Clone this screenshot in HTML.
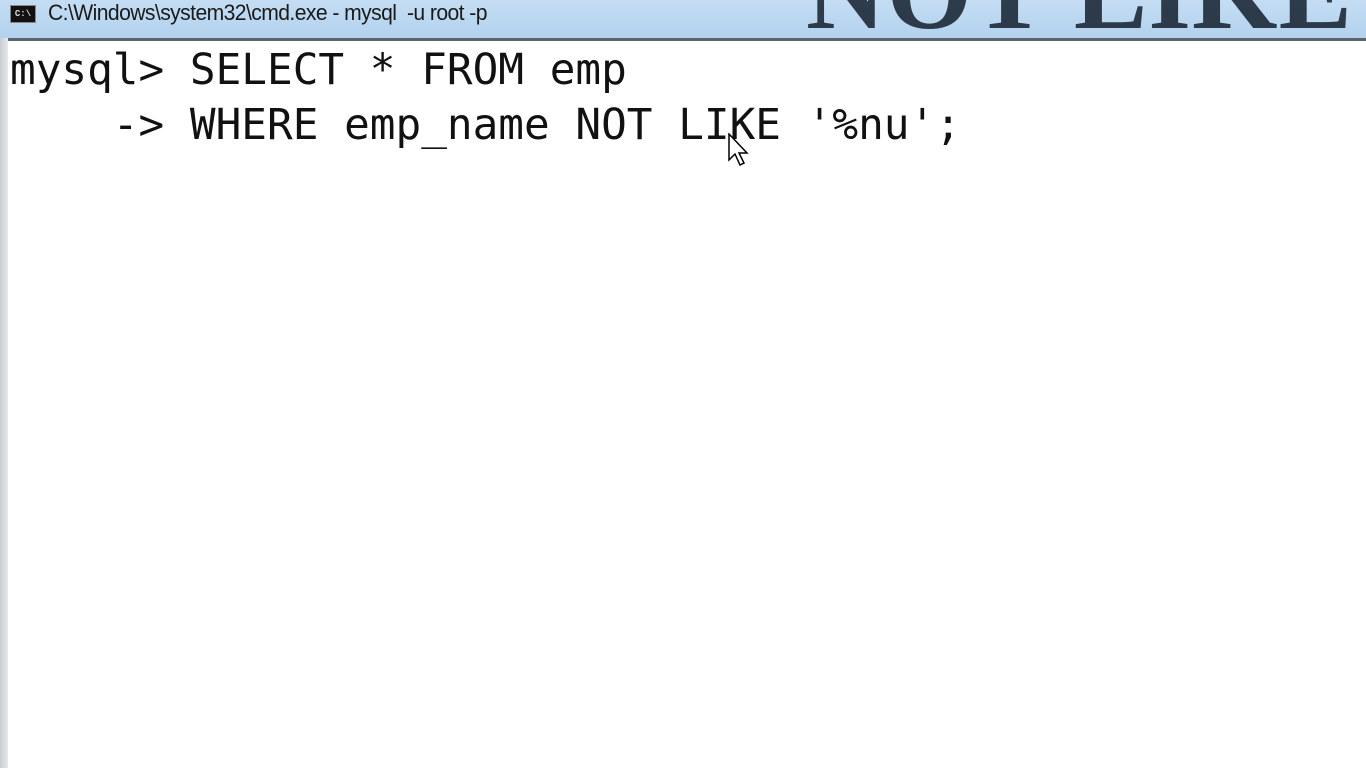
<!DOCTYPE html>
<html><head><style>
html,body{margin:0;padding:0;width:1366px;height:768px;overflow:hidden;background:#fff;position:relative}
.tb{position:absolute;left:0;top:0;width:1366px;height:38px;background:linear-gradient(#c4ddf3,#b3d2ee);overflow:hidden}
.title{position:absolute;left:48px;top:0px;font:22px "Liberation Sans",sans-serif;color:#1a1a1a;letter-spacing:-0.6px;transform:scaleX(.96);transform-origin:left}
.ico{position:absolute;left:10px;top:5px;width:24px;height:16px;background:#111;border:1px solid #888;color:#ddd;font:bold 9px "Liberation Mono",monospace;line-height:16px;text-align:center}
.big{position:absolute;left:806px;top:-72px;font:bold 110px "Liberation Serif",serif;color:#1d2a38;letter-spacing:1px;opacity:.9;white-space:nowrap}
.lside{position:absolute;left:0;top:38px;width:8px;height:730px;background:linear-gradient(90deg,#c8ccd2,#e8eaee)}
.win{position:absolute;left:8px;top:38px;width:1358px;height:730px;background:#fff;border-top:3px solid #5a6370}
pre{position:absolute;left:10px;top:43px;margin:0;font:42.7px/55px "DejaVu Sans Mono","Liberation Mono",monospace;color:#111}
</style></head><body>
<div class="tb"><div class="big">NOT LIKE</div><div class="ico">C:\</div><div class="title">C:\Windows\system32\cmd.exe - mysql&nbsp; -u root -p</div></div>
<div class="lside"></div>
<div class="win"></div>
<pre>mysql&gt; SELECT * FROM emp
    -&gt; WHERE emp_name NOT LIKE '%nu';</pre>
<svg style="position:absolute;left:728px;top:133px" width="24" height="36" viewBox="0 0 24 36"><path d="M1 1 L1 27 L7 21 L12 32 L16 30 L11 20 L19 20 Z" fill="#fff" stroke="#000" stroke-width="1.5"/></svg>
</body></html>
